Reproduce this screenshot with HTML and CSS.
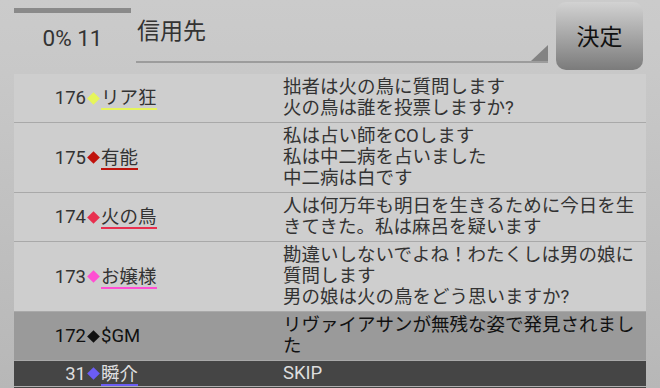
FILE: index.html
```html
<!DOCTYPE html>
<html lang="ja">
<head>
    <meta charset="UTF-8">
    <meta name="viewport" content="width=device-width, initial-scale=1.0">
    <title>投票</title>
    <link rel="stylesheet" href="styles.css">
</head>
<body>
    <div class="top">
        <div class="status">
            <div class="progress"></div>
            <div class="count">0% 11</div>
        </div>
        <div class="spinner">
            <span class="spinner-text">信用先</span>
            <span class="spinner-arrow"></span>
        </div>
        <button class="decide">決定</button>
    </div>

    <div class="log">
        <div class="row">
            <div class="who"><span class="num">176</span><span class="mark c-yellow"></span><span class="name c-yellow">リア狂</span></div>
            <div class="msg">拙者は火の鳥に質問します<br>火の鳥は誰を投票しますか?</div>
        </div>
        <div class="row">
            <div class="who"><span class="num">175</span><span class="mark c-red"></span><span class="name c-red">有能</span></div>
            <div class="msg">私は占い師をCOします<br>私は中二病を占いました<br>中二病は白です</div>
        </div>
        <div class="row">
            <div class="who"><span class="num">174</span><span class="mark c-crimson"></span><span class="name c-crimson">火の鳥</span></div>
            <div class="msg">人は何万年も明日を生きるために今日を生きてきた。私は麻呂を疑います</div>
        </div>
        <div class="row">
            <div class="who"><span class="num">173</span><span class="mark c-pink"></span><span class="name c-pink">お嬢様</span></div>
            <div class="msg">勘違いしないでよね！わたくしは男の娘に質問します<br>男の娘は火の鳥をどう思いますか?</div>
        </div>
        <div class="row row-gm">
            <div class="who"><span class="num">172</span><span class="mark c-black"></span><span class="gm">$GM</span></div>
            <div class="msg">リヴァイアサンが無残な姿で発見されました</div>
        </div>
        <div class="row row-skip">
            <div class="who"><span class="num">31</span><span class="mark c-blue"></span><span class="name c-blue">瞬介</span></div>
            <div class="msg">SKIP</div>
        </div>
        <div class="row row-skip">
            <div class="who"></div>
            <div class="msg"></div>
        </div>
    </div>
</body>
</html>
```

FILE: styles.css
```css
body {
    margin: 0;
    height: 388px;
    overflow: hidden;
    font-family: Roboto, "Noto Sans CJK JP", sans-serif;
    color: #333;
    background: linear-gradient(to bottom, #cbcbcb 0, #c8c8c8 73px, #b7b7b7 100%);
}
.top {
    display: flex;
    height: 71px;
    padding: 2px 17px 0 14px;
    box-sizing: border-box;
}
.status {
    width: 117px;
    padding-top: 6px;
}
.progress {
    height: 5px;
    background-color: #8a8a8a;
}
.count {
    margin-top: 12px;
    text-align: center;
    font-size: 22.5px;
    line-height: 26px;
}
.spinner {
    position: relative;
    width: 412px;
    height: 59px;
    margin-left: 5px;
    border-bottom: 2px solid #9c9c9c;
}
.spinner-text {
    display: block;
    padding: 15px 0 0 1px;
    font-size: 23px;
    line-height: 30px;
}
.spinner-arrow {
    position: absolute;
    right: 0;
    bottom: 0;
    width: 17px;
    height: 16px;
    background-color: #838383;
    clip-path: polygon(100% 0, 100% 100%, 0 100%);
}
.decide {
    width: 87px;
    height: 68px;
    margin-left: 8px;
    border: none;
    border-radius: 10px;
    background: linear-gradient(to bottom, #d2d2d2, #7b7b7b);
    font-family: Roboto, "Noto Sans CJK JP", sans-serif;
    font-size: 23px;
    color: #111;
    padding: 0 0 2px 0;
}
.log {
    margin: 3px 14px 0 14px;
}
.row {
    display: grid;
    grid-template-columns: 269px 1fr;
    background-color: #cecece;
    border-bottom: 1px solid #a9a9a9;
}
.who {
    display: flex;
    align-items: center;
    font-size: 18.5px;
}
.num {
    width: 72px;
    text-align: right;
}
.mark {
    display: inline-block;
    width: 9px;
    height: 9px;
    margin: 0 3px 0 3px;
    transform: rotate(45deg);
}
.name {
    display: inline-block;
    line-height: 20px;
    padding-top: 2px;
    border-bottom: 2px solid;
}
.gm {
    line-height: 22px;
}
.msg {
    padding: 3px 0;
    font-size: 18.5px;
    line-height: 21px;
}
.row-gm {
    background-color: #9a9a9a;
    color: #111;
}
.row-skip {
    background-color: #454545;
    color: #dedede;
    border-bottom-color: #b0b0b0;
}
.row-skip .msg {
    padding: 2px 0;
    min-height: 21px;
}
.c-yellow { background-color: #e6f55a; border-color: #e6f55a; }
.c-red { background-color: #c0120c; border-color: #c0120c; }
.c-crimson { background-color: #e8304f; border-color: #e8304f; }
.c-pink { background-color: #ff4fd2; border-color: #ff4fd2; }
.c-black { background-color: #111; border-color: #111; }
.c-blue { background-color: #6b5cf5; border-color: #6b5cf5; }
.name.c-yellow, .name.c-red, .name.c-crimson, .name.c-pink, .name.c-blue {
    background-color: transparent;
}
```
